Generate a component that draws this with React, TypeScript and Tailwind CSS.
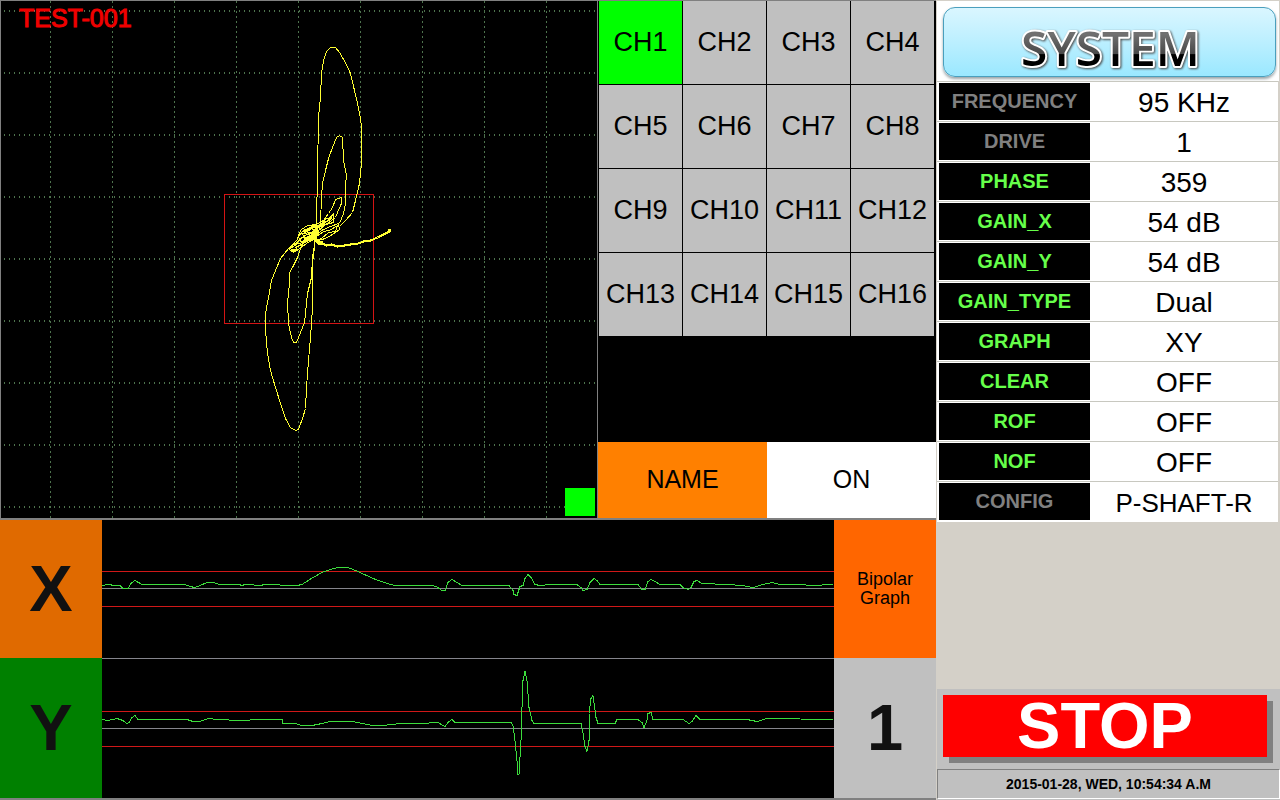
import { useState } from "react";
import clsx from "clsx";

const CHANNELS = Array.from({ length: 16 }, (_, i) => `CH${i + 1}`);

const SETTINGS = [
    { label: "FREQUENCY", value: "95 KHz", locked: true },
    { label: "DRIVE", value: "1", locked: true },
    { label: "PHASE", value: "359" },
    { label: "GAIN_X", value: "54 dB" },
    { label: "GAIN_Y", value: "54 dB" },
    { label: "GAIN_TYPE", value: "Dual" },
    { label: "GRAPH", value: "XY" },
    { label: "CLEAR", value: "OFF" },
    { label: "ROF", value: "OFF" },
    { label: "NOF", value: "OFF" },
    { label: "CONFIG", value: "P-SHAFT-R", locked: true, compact: true },
];

const GRID_X = [50, 112, 174, 236, 298, 360, 422, 484, 546];
const GRID_Y = [11, 73, 135, 197, 259, 321, 383, 445, 507];

// Lissajous traces of the impedance plane
const LOOPS = [
    "314,240 316,222 317,173 318,117 320,97 321,73 323,60 326,51 330,47 335,47 339,52 345,62 350,73 354,90 357,103 360,118 361,127 361,163 359,183 355,200 352,212 345,220 339,226",
    "318,232 320,222 321,197 322,183 325,170 328,158 332,147 336,137 339,135 342,137 343,160 346,175 345,185 345,203 343,213 339,223",
    "308,230 316,224 323,220 328,213 332,207 335,199 341,197 341,203 337,212 335,217 327,223 316,228",
    "306,234 296,242 288,248 280,258 275,270 271,280 268,297 265,313 265,330 267,353 270,370 275,387 280,403 285,418 290,427 295,430 298,429 302,418 305,408 306,387 308,360 310,337 312,307 312,263 314,247 316,224",
    "304,240 300,248 297,257 292,267 289,272 289,283 287,302 288,323 291,337 293,342 296,342 300,332 304,322 307,293 311,277 312,257 314,245 315,228",
];

// dense centre knot where the small signals overlap
const KNOT = [
    "316,224 307,225 301,229 298,234 297,239 292,244 289,249 293,252 299,248 306,243 313,239",
    "298,236 303,230 310,228 317,230 312,236 305,240 300,241 298,236",
    "302,233 307,231 309,235 304,238 302,233 311,232 318,226 326,221 333,213 333,222 325,224 317,231",
    "290,248 297,243 305,242 313,237 321,230 330,226 338,223 339,229 332,234 325,238 317,240",
    "316,236 323,231 329,230 337,225 335,231 328,232 321,238 316,240",
    "291,251 297,250 295,247 303,243 309,238 315,235 317,228 323,222 329,220 332,214",
    "294,245 300,238 306,234 313,232 320,225 326,218 331,218",
];

const TRACE_X =
    "102,585 108,584 115,585 120,585 123,588 128,588 131,583 135,580 142,584 185,584 190,586 195,587 200,585 207,582 213,582 220,584 240,584 241,585 246,584 262,585 263,584 297,585 302,584 313,577 322,572 330,569 338,567 348,567 358,571 373,578 387,583 395,585 433,585 438,587 442,590 445,590 448,582 452,579 457,582 462,585 509,585 513,590 514,594 517,595 520,586 523,585 525,578 528,574 531,577 535,584 540,585 550,584 577,584 581,587 583,590 587,589 590,582 594,578 597,580 600,584 638,584 642,589 645,589 648,581 651,579 655,581 660,584 680,584 683,587 688,589 691,587 694,581 697,580 702,583 727,584 742,585 753,587 763,584 772,582 780,584 800,584 812,585 833,584";

const TRACE_Y =
    "102,719 108,720 117,718 123,720 127,723 129,722 132,717 135,715 138,719 143,719 187,719 193,721 200,721 208,718 217,719 240,720 260,719 282,719 283,723 295,723 302,725 312,725 322,723 330,721 353,721 362,723 373,725 383,725 400,723 420,723 438,722 445,726 448,722 452,719 455,722 511,722 513,725 515,740 517,760 518,774 519,774 521,740 522,707 523,680 525,671 527,680 529,707 532,720 534,723 581,723 583,732 585,746 587,751 589,740 589,713 591,698 593,695 594,702 596,717 598,723 615,723 617,719 638,719 642,722 644,727 647,720 648,713 651,712 653,719 683,719 689,723 692,721 696,715 700,719 747,719 757,721 767,718 833,719";

const Scope = () => (
    <div className="relative bg-black border-l border-r border-[#808080]">
        <svg
            viewBox="1 1 596 517"
            preserveAspectRatio="none"
            shapeRendering="crispEdges"
            className="block w-full h-full"
            aria-hidden="true"
        >
            <g stroke="#4d734d" fill="none">
                {GRID_X.map((x) => (
                    <path key={x} d={`M${x + 0.5} 1V518`} strokeDasharray="2 3" />
                ))}
                {GRID_Y.map((y) => (
                    <path key={y} d={`M4 ${y}H596`} strokeWidth="2" strokeDasharray="1 4" />
                ))}
            </g>
            <rect x="224.5" y="194.5" width="149" height="129" fill="none" stroke="#d41414" />
            <g transform="translate(.5 .5)" fill="none" stroke="#ffff32">
                {LOOPS.map((points) => (
                    <polyline key={points} points={points} />
                ))}
                {KNOT.map((points) => (
                    <polyline key={points} points={points} />
                ))}
                <polyline points="303,231 308,229 313,226 318,226 324,222" strokeWidth="3" />
                <polyline points="304,240 310,238 316,230 314,238 318,242 322,243" strokeWidth="4" />
                <polyline
                    points="318,241 322,243 326,245 331,244 337,246 344,245 350,244 358,243 363,241 370,240 377,237 383,234 389,231"
                    strokeWidth="2"
                />
                <path d="M387 230h3M290 250h5" strokeWidth="3" />
            </g>
            <rect x="565" y="488" width="30" height="28" fill="#0f0" />
        </svg>
        <p className="absolute left-[18px] top-[3px] text-[25px] leading-7 text-[#f00000] [-webkit-text-stroke:1px_#f00000]">
            TEST-001
        </p>
    </div>
);

type StripProps = {
    top: number;
    height: number;
    limits: [number, number];
    zero: number;
    points: string;
};

const Strip = ({ top, height, limits, zero, points }: StripProps) => (
    <svg
        viewBox={`102 ${top} 732 ${height}`}
        preserveAspectRatio="none"
        shapeRendering="crispEdges"
        className="block w-full h-full bg-black"
        aria-hidden="true"
    >
        <rect x="102" y={zero} width="732" height="1" fill="#85858c" />
        {limits.map((y) => (
            <rect key={y} x="102" y={y} width="732" height="1" fill="#d01818" />
        ))}
        <polyline points={points} transform="translate(0 .5)" fill="none" stroke="#3cdc3c" />
    </svg>
);

const SystemButton = () => (
    <button
        type="button"
        className="block w-full h-[70px] rounded-xl border border-[#4a9fbd] bg-linear-to-b from-[#daf6ff] to-[#9ae8ff] shadow-[0_2px_3px_#9aa4a8]"
    >
        <svg viewBox="0 0 332 68" className="block w-full h-full overflow-visible">
            <defs>
                <linearGradient id="chrome" x1="0" y1="0" x2="0" y2="1">
                    <stop offset="0.3" stopColor="#707070" />
                    <stop offset="0.6" stopColor="#484848" />
                    <stop offset="0.61" stopColor="#000" />
                </linearGradient>
            </defs>
            <text
                x="167"
                y="58"
                textAnchor="middle"
                fill="url(#chrome)"
                stroke="#fff"
                strokeWidth="4"
                strokeLinejoin="round"
                paintOrder="stroke"
                className="font-['Open_Sans',sans-serif] text-[48px] font-semibold drop-shadow-[1px_1px_1px_#444]"
            >
                SYSTEM
            </text>
        </svg>
    </button>
);

const App = () => {
    const [channel, setChannel] = useState("CH1");

    return (
        <div className="flex min-h-screen bg-[#d4d0c8] font-['Liberation_Sans',Arial,sans-serif] text-black">
            <main className="flex flex-1 min-w-0 flex-col">
                {/* Impedance plane and channel picker */}
                <section className="grid grid-cols-[598fr_338fr] border-t border-b-2 border-[#808080]">
                    <Scope />
                    <div className="flex flex-col bg-black">
                        <div className="grid grid-cols-4 gap-px pl-px pr-[2px]">
                            {CHANNELS.map((name) => (
                                <button
                                    key={name}
                                    type="button"
                                    onClick={() => setChannel(name)}
                                    className={clsx(
                                        "h-[83px] text-[27px]",
                                        name === channel ? "bg-[#00ff00]" : "bg-[#c0c0c0]"
                                    )}
                                >
                                    {name}
                                </button>
                            ))}
                        </div>
                        <div className="grid grid-cols-2 mt-[106px] h-[76px] text-[25px]">
                            <button type="button" className="bg-[#ff8000]">NAME</button>
                            <button type="button" className="bg-white">ON</button>
                        </div>
                    </div>
                </section>

                {/* Strip charts */}
                <section className="grid flex-1 grid-cols-[102fr_732fr_102fr] grid-rows-[138px_minmax(140px,1fr)] border-b-2 border-[#808080]">
                    <h2 className="flex items-center justify-center bg-[#e06a00] text-[65px] font-bold text-[#111]">X</h2>
                    <Strip top={520} height={138} limits={[571, 606]} zero={588} points={TRACE_X} />
                    <button type="button" className="bg-[#ff6600] text-[18px] leading-[19px]">
                        Bipolar
                        <br />
                        Graph
                    </button>
                    <h2 className="flex items-center justify-center bg-[#008000] text-[65px] font-bold text-[#111]">Y</h2>
                    <div className="border-t border-[#85858c]">
                        <Strip top={659} height={139} limits={[711, 746]} zero={728} points={TRACE_Y} />
                    </div>
                    <button type="button" className="bg-[#c0c0c0] text-[65px] font-bold text-[#111]">1</button>
                </section>
            </main>

            <aside className="flex w-[344px] shrink-0 flex-col pl-px">
                <div className="h-[81px] border-t border-r border-[#d4d0c8] bg-white pl-[6px] pt-[6px] pr-[3px]">
                    <SystemButton />
                </div>

                <table className="w-full table-fixed border-r-2 border-[#d4d0c8] bg-white">
                    <tbody>
                        {SETTINGS.map(({ label, value, locked, compact }) => (
                            <tr key={label} className="h-10 border-t border-[#c8c8c0]">
                                <th scope="row" className="w-[153px] py-px pl-[2px]">
                                    <div
                                        className={clsx(
                                            "flex h-[37px] items-center justify-center bg-black pb-0.5 text-xl font-bold",
                                            locked ? "text-[#808080]" : "text-[#66ff4a]"
                                        )}
                                    >
                                        {label}
                                    </div>
                                </th>
                                <td className={clsx("pt-0.5 text-center leading-8", compact ? "text-[26px]" : "text-[28px]")}>
                                    {value}
                                </td>
                            </tr>
                        ))}
                    </tbody>
                </table>

                <div className="mt-auto bg-[#c0c0c0] pt-[6px] pb-px">
                    <div className="pl-[6px] pr-[13px]">
                        <button
                            type="button"
                            className="block w-full h-[62px] bg-[#ff0000] text-[65px] leading-[62px] font-bold text-white shadow-[6px_6px_0_#808080]"
                        >
                            STOP
                        </button>
                    </div>
                    <p className="mt-3 h-[30px] border border-[#808080] border-r-white border-b-white text-center text-sm leading-7 font-bold">
                        2015-01-28, WED, 10:54:34 A.M
                    </p>
                </div>
            </aside>
        </div>
    );
};

export default App;
